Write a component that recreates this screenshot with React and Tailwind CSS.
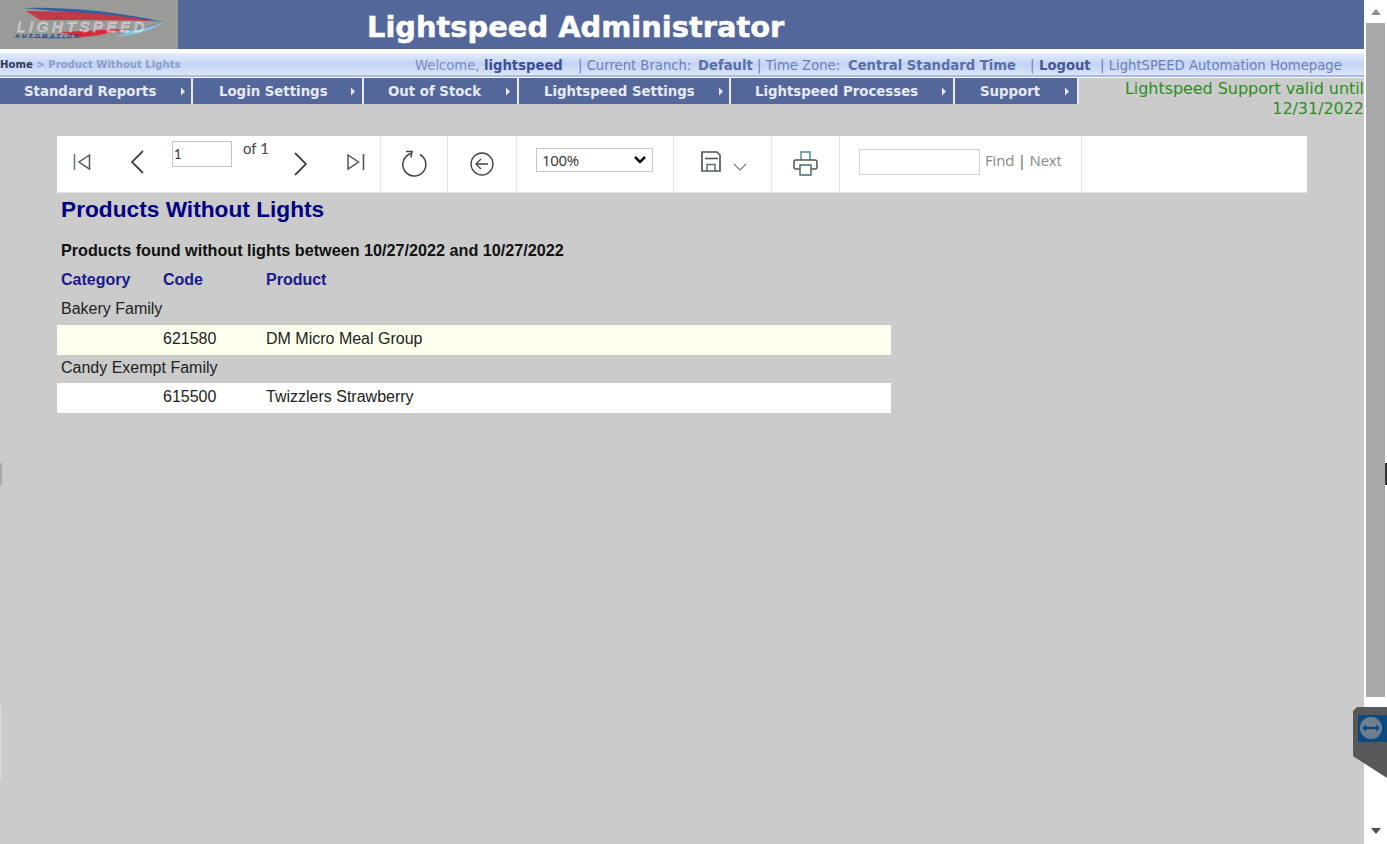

const navItems = [
  ["Standard Reports", 193, 24, 180],
  ["Login Settings", 171, 26, 157],
  ["Out of Stock", 155, 24, 141],
  ["Lightspeed Settings", 212, 25, 199],
  ["Lightspeed Processes", 224, 24, 210],
  ["Support", 124, 25, 109],
];

function Logo() {
  return (
    <div className="w-[178px] h-[49px] bg-[#9a9a98] shrink-0">
      <svg width="178" height="49" viewBox="0 0 178 49">
        <path d="M22 8 Q90 6 164 22 Q100 15 22 8Z" fill="#33609c" />
        <path d="M26 11 Q100 11 152 21 L90 20 L40 20Z" fill="#c23a48" />
        <path d="M60 32 L125 29 Q100 36 80 37Z" fill="#d8283a" />
        <path d="M14 36 Q90 45 164 22 Q120 34 90 37 Q50 38 14 36Z" fill="#3a70ae" />
        <path d="M128 31 Q150 29 164 22 Q152 32 118 37Z" fill="#86c4de" />
        <text x="17" y="32" fontFamily="'Liberation Sans', sans-serif" fontStyle="italic" fontSize="15" letterSpacing="3.6" fill="none" stroke="#f0f2f6" strokeWidth="0.5">LIGHTSPEED</text>
        <text x="15" y="38" fontFamily="'Liberation Sans', sans-serif" fontWeight="700" fontStyle="italic" fontSize="6" letterSpacing="2.6" fill="#26407c">AUTOMATION</text>
      </svg>
    </div>
  );
}

function Arrow() {
  return (
    <svg width="6" height="9" viewBox="0 0 6 9" className="absolute top-[9px]" style={{ left: "var(--ax)" }}>
      <path d="M1 0.5 L5 4.5 L1 8.5Z" fill="#e8ecf4" />
    </svg>
  );
}

const s = { fill: "none", stroke: "#555", strokeWidth: 1.5 };

function Toolbar() {
  return (
    <div className="mt-[31px] ml-[57px] w-[1250px] h-[57px] bg-white flex border-b border-[#e6e6e6]">
      <div className="w-[324px] h-full border-r border-[#e4e4e4] flex items-start shrink-0">
        <svg width="18" height="18" viewBox="0 0 18 18" className="ml-[16px] mt-[17px]">
          <path d="M1.5 1V17" stroke="#6b7f75" strokeWidth="1.6" />
          <path d="M16.5 2 L6 9 L16.5 16Z" {...s} />
        </svg>
        <svg width="16" height="24" viewBox="0 0 16 24" className="ml-[39px] mt-[14px]">
          <path d="M13 1 L2 12 L13 23" fill="none" stroke="#444" strokeWidth="1.8" />
        </svg>
        <input readOnly value="1" className="ml-[26px] mt-[5px] w-[60px] h-[26px] border border-[#c4c4c4] px-[1px] text-[13px] text-[#333] font-['Lato',sans-serif] outline-none" />
        <span className="ml-[11px] mt-[2px] text-[15px] leading-[20px] text-[#444] font-['Lato',sans-serif]">of 1</span>
        <svg width="16" height="24" viewBox="0 0 16 24" className="ml-[23px] mt-[16px]">
          <path d="M3 1 L14 12 L3 23" fill="none" stroke="#444" strokeWidth="1.8" />
        </svg>
        <svg width="20" height="18" viewBox="0 0 20 18" className="ml-[38px] mt-[17px]">
          <path d="M2 2 L12.5 9 L2 16Z" {...s} />
          <path d="M17.5 1V17" stroke="#555" strokeWidth="1.6" />
        </svg>
      </div>
      <div className="w-[67px] h-full border-r border-[#e4e4e4] flex items-center justify-center shrink-0">
        <svg width="28" height="28" viewBox="0 0 28 28" className="mt-[-1px]">
          <path d="M11 3.5 A11.5 11.5 0 1 0 20 4.5" fill="none" stroke="#444" strokeWidth="1.5" />
          <path d="M6 1.5 L12 1.5 L11 7.5" fill="none" stroke="#444" strokeWidth="1.5" />
        </svg>
      </div>
      <div className="w-[69px] h-full border-r border-[#e4e4e4] flex items-center justify-center shrink-0">
        <svg width="26" height="26" viewBox="0 0 26 26">
          <circle cx="13" cy="13" r="11" fill="none" stroke="#444" strokeWidth="1.3" />
          <path d="M19 13 H7 M12 8 L7 13 L12 18" fill="none" stroke="#444" strokeWidth="1.3" />
        </svg>
      </div>
      <div className="w-[157px] h-full border-r border-[#e4e4e4] flex items-start shrink-0">
        <div className="ml-[19px] mt-[12px] w-[117px] h-[24px] border border-[#c4c4c4] bg-white flex items-center justify-between pl-[5px] pr-[5px]">
          <span className="text-[15px] tracking-[-0.3px] text-[#333] font-['Open_Sans',sans-serif]">100%</span>
          <svg width="14" height="10" viewBox="0 0 14 10"><path d="M2 2 L7 7 L12 2" fill="none" stroke="#111" strokeWidth="2.6" /></svg>
        </div>
      </div>
      <div className="w-[98px] h-full border-r border-[#e4e4e4] flex items-start shrink-0">
        <svg width="20" height="21" viewBox="0 0 20 21" className="ml-[27px] mt-[15px]">
          <path d="M1 1 H16 L19 4 V20 H1Z" fill="none" stroke="#555" strokeWidth="1.7" />
          <path d="M4 7.5 H17" stroke="#555" strokeWidth="1.6" />
          <path d="M6 20 V13.5 H14 V20" fill="none" stroke="#55706a" strokeWidth="1.5" />
        </svg>
        <svg width="14" height="8" viewBox="0 0 14 8" className="ml-[12px] mt-[27px]">
          <path d="M1 1 L7 7 L13 1" fill="none" stroke="#777" strokeWidth="1.1" />
        </svg>
      </div>
      <div className="w-[68px] h-full border-r border-[#e4e4e4] flex items-center justify-center shrink-0">
        <svg width="25" height="25" viewBox="0 0 25 25" className="mt-[-1px]">
          <path d="M8 9 V1 H17 V9" fill="none" stroke="#4a8a92" strokeWidth="1.4" />
          <path d="M6.5 18 H3 Q1 18 1 16 V11 Q1 9 3 9 H22 Q24 9 24 11 V16 Q24 18 22 18 H18.5" fill="none" stroke="#555" strokeWidth="1.5" />
          <path d="M7 14 H18 V24 H7Z" fill="none" stroke="#4a6a72" strokeWidth="1.5" />
        </svg>
      </div>
      <div className="w-[242px] h-full border-r border-[#e4e4e4] flex items-start shrink-0">
        <div className="ml-[19px] mt-[13px] w-[121px] h-[26px] border border-[#d2d2d2] bg-white" />
        <span className="ml-[5px] mt-[14px] text-[15px] leading-[21px] text-[#888] font-['Open_Sans',sans-serif] tracking-[-0.2px]">Find <span className="text-[#555]">|</span> Next</span>
      </div>
      <div className="flex-1" />
    </div>
  );
}

function Report() {
  const cols = "grid grid-cols-[102px_103px_1fr] w-[834px] pl-[4px] text-[16px] font-['Liberation_Sans',sans-serif]";
  return (
    <div className="ml-[57px] font-['Liberation_Sans',sans-serif]">
      <h1 className="ml-[4px] mt-[3px] text-[22.7px] leading-[26px] font-bold text-[#000080]">Products Without Lights</h1>
      <p className="ml-[4px] mt-[19px] text-[16.2px] leading-[18px] font-bold text-[#111]">Products found without lights between 10/27/2022 and 10/27/2022</p>
      <div className={`${cols} mt-[6px] h-[30px] items-center font-bold text-[#1a1a8c]`}>
        <span>Category</span><span>Code</span><span>Product</span>
      </div>
      <div className="w-[834px] pl-[4px] h-[30px] pb-[3px] flex items-center text-[16px] text-[#222]">Bakery Family</div>
      <div className={`${cols} h-[30px] pb-[2px] items-center bg-[#ffffee] text-[#222]`}>
        <span /><span>621580</span><span>DM Micro Meal Group</span>
      </div>
      <div className="w-[834px] pl-[4px] h-[28px] pb-[3px] flex items-center text-[16px] text-[#222]">Candy Exempt Family</div>
      <div className={`${cols} h-[30px] pb-[2px] items-center bg-white text-[#222]`}>
        <span /><span>615500</span><span>Twizzlers Strawberry</span>
      </div>
    </div>
  );
}

export default function App() {
  return (
    <div className="relative w-[1387px] h-[844px] overflow-hidden flex bg-white font-['DejaVu_Sans',sans-serif]">
      <div className="w-[1364px] h-full bg-[#cbcbcb] shrink-0">
        <header className="h-[49px] bg-[#54679b] flex">
          <Logo />
          <div className="ml-[189px] text-white font-bold text-[28.9px] leading-[54px] whitespace-nowrap [-webkit-text-stroke:0.5px_white]">Lightspeed Administrator</div>
        </header>
        <div className="h-[4px] bg-white" />
        <div className="h-[24px] bg-gradient-to-b from-[#e6edfb] via-[#c2d3f3] to-[#dbe5f9] border-b-2 border-[#a9bce6] flex items-center text-[13.2px] whitespace-nowrap text-[#6d7fb5] relative">
          <div className="w-[415px] shrink-0 text-[10.1px] font-bold leading-[16px] self-start mt-[4px]">
            <span className="text-[#333b5c]">Home</span> <span className="text-[#8a9ed0]">&gt; Product Without Lights</span>
          </div>
          <div className="flex items-center mt-[3px]">
            <span className="text-[#7b8cc4] w-[69px]">Welcome, </span>
            <span className="font-bold text-[#3c4f96] w-[94px]">lightspeed</span>
            <span className="w-[120px]">| Current Branch: </span>
            <span className="font-bold text-[#5a6ea8] w-[59px]">Default</span>
            <span className="w-[91px]">| Time Zone: </span>
            <span className="font-bold text-[#5a6ea8] w-[182px]">Central Standard Time</span>
            <span className="w-[9px]">| </span>
            <span className="font-bold text-[#465a94] w-[61px]">Logout</span>
            <span>| LightSPEED Automation Homepage</span>
          </div>
        </div>
        <div className="h-[1px] bg-white" />
        <nav className="h-[27px] flex relative">
          {navItems.map(([label, w, pad, ax]) => (
            <div key={label} className="relative h-[26px] bg-[#54679b] border-r-2 border-[#e8ecf4] shrink-0 text-[13.3px] font-bold text-[#e6eaf3] leading-[27px] whitespace-nowrap" style={{ width: w, paddingLeft: pad, "--ax": ax + "px" }}>
              {label}
              <Arrow />
            </div>
          ))}
          <div className="flex-1 text-right text-[16px] leading-[20px] pt-[1px] text-[#2a8f1e] tracking-[-0.05px] whitespace-nowrap">
            Lightspeed Support valid until<br />12/31/2022
          </div>
        </nav>
        <Toolbar />
        <Report />
      </div>
      <div className="w-[23px] h-full bg-white flex flex-col items-center shrink-0">
        <svg width="10" height="6" viewBox="0 0 10 6" className="mt-[9px]"><path d="M0 6 L5 0 L10 6Z" fill="#8e8e8e" /></svg>
        <div className="mt-[8px] w-[19px] h-[674px] bg-[#a8a8a8]" />
        <svg width="10" height="6" viewBox="0 0 10 6" className="mt-[131px]"><path d="M0 0 L5 6 L10 0Z" fill="#505050" /></svg>
      </div>
      <svg width="34" height="72" viewBox="0 0 34 72" className="absolute left-[1353px] top-[707px]">
        <path d="M4 0 H34 V71 L3 51 Q0 50 0 47 V4 Z" fill="#57585a" />
        <rect x="5" y="8" width="29" height="27" fill="#0d4a80" />
        <circle cx="18" cy="21" r="11" fill="#6f7f8d" />
        <path d="M9 21 L13 17.5 V19.8 H23 V17.5 L27 21 L23 24.5 V22.2 H13 V24.5Z" fill="#0d4a80" />
      </svg>
      <div className="absolute left-0 top-[463px] w-[2px] h-[22px] bg-[#aaaaaa]" />
      <div className="absolute left-[1385px] top-[463px] w-[2px] h-[22px] bg-[#333333]" />
      <div className="absolute left-0 top-[706px] w-[1px] h-[74px] bg-[#dddddd]" />
    </div>
  );
}
